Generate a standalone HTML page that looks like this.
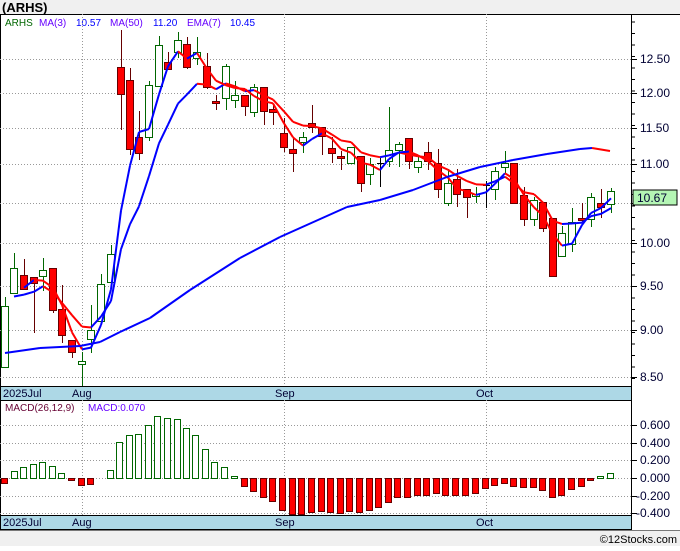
<!DOCTYPE html><html><head><style>
body{margin:0;width:680px;height:546px;overflow:hidden;background:#fff;font-family:"Liberation Sans",sans-serif}
svg text{font-family:"Liberation Sans",sans-serif}
</style></head><body>
<svg id="s" width="680" height="546" xmlns="http://www.w3.org/2000/svg">
<rect x="0" y="0" width="680" height="14" fill="#f0f0f0"/>
<text x="2" y="12" font-size="13" font-weight="bold" fill="#000">(ARHS)</text>
<line x1="0" y1="14.5" x2="680" y2="14.5" stroke="#000"/>
<rect x="0" y="530" width="680" height="16" fill="#f0f0f0"/>
<line x1="0" y1="530.5" x2="680" y2="530.5" stroke="#000" stroke-width="0.5"/>
<text x="677" y="543" font-size="11" text-anchor="end" fill="#000">©12Stocks.com</text>
<rect x="0" y="386" width="632" height="14" fill="#add8e6"/>
<rect x="0" y="515" width="632" height="15" fill="#add8e6"/>
<line x1="0" y1="386.5" x2="632" y2="386.5" stroke="#000"/>
<line x1="0" y1="400.5" x2="632" y2="400.5" stroke="#000"/>
<line x1="0" y1="515.5" x2="632" y2="515.5" stroke="#000"/>
<line x1="0" y1="529.5" x2="632" y2="529.5" stroke="#000"/>
<line x1="631.5" y1="14" x2="631.5" y2="530" stroke="#000"/>
<line x1="0.5" y1="14" x2="0.5" y2="530" stroke="#000"/>
<g font-size="11" fill="#000033">
<text x="3" y="397">2025Jul</text><text x="72" y="397">Aug</text><text x="275" y="397">Sep</text><text x="476" y="397">Oct</text>
<text x="3" y="526">2025Jul</text><text x="72" y="526">Aug</text><text x="275" y="526">Sep</text><text x="476" y="526">Oct</text>
</g>
<text x="5" y="26" font-size="10" fill="#006600">ARHS</text>
<text x="39" y="26" font-size="10" fill="#6600ff">MA(3)</text>
<text x="76" y="26" font-size="10" fill="#0000ff">10.57</text>
<text x="110" y="26" font-size="10" fill="#6600ff">MA(50)</text>
<text x="153" y="26" font-size="10" fill="#0000ff">11.20</text>
<text x="187" y="26" font-size="10" fill="#6600ff">EMA(7)</text>
<text x="230" y="26" font-size="10" fill="#0000ff">10.45</text>
<text x="5" y="411" font-size="10" fill="#660033">MACD(26,12,9)</text>
<text x="88" y="411" font-size="10" fill="#6600ff">MACD:0.070</text>
<g id="grid" stroke="#999" stroke-dasharray="1,2" stroke-width="1"></g>
<g id="c"></g>
<rect x="633" y="190" width="44" height="15" fill="#b4f5b4" stroke="#000"/>
<text x="637" y="202" font-size="12" fill="#000033">10.67</text>
</svg>
<script>
var s=document.getElementById('c'),g=document.getElementById('grid'),NS='http://www.w3.org/2000/svg';
function el(t,a,p){var e=document.createElementNS(NS,t);for(var k in a)e.setAttribute(k,a[k]);(p||s).appendChild(e);return e;}
var pl=[[59,'12.50'],[93,'12.00'],[128,'11.50'],[164,'11.00'],[203,''],[243,'10.00'],[286,'9.50'],[330,'9.00'],[377,'8.50']];
pl.forEach(function(p){el('line',{x1:0,y1:p[0]+.5,x2:631,y2:p[0]+.5},g);var t=el('line',{x1:631,y1:p[0]+.5,x2:637,y2:p[0]+.5,stroke:'#000'});if(p[1]){var x=el('text',{x:640,y:p[0]+4,'font-size':12,fill:'#000033'});x.textContent=p[1];}});
for(var y=22;y<386;y+=11.5){el('line',{x1:631,y1:y,x2:635,y2:y,stroke:'#000'});}
var ml=[[425,'0.600'],[443,'0.400'],[460,'0.200'],[478,'0.000'],[496,'-0.200'],[513,'-0.400']];
ml.forEach(function(p){el('line',{x1:0,y1:p[0]+.5,x2:631,y2:p[0]+.5},g);el('line',{x1:631,y1:p[0]+.5,x2:637,y2:p[0]+.5,stroke:'#000'});var x=el('text',{x:p[1][0]=='-'?636:640,y:p[0]+4,'font-size':12,fill:'#000033'});x.textContent=p[1];});
[82,284,486].forEach(function(x){el('line',{x1:x+.5,y1:14,x2:x+.5,y2:386},g);el('line',{x1:x+.5,y1:400,x2:x+.5,y2:515},g);});
// x, type(g/r/d), bodyTop, bodyBot, high, low
var C=[[5,'g',306,367,297,367],[14,'g',268,293,253,293],[24,'r',275,289,259,289],[34,'r',277,283,280,333],[43,'g',270,276,258,291],[53,'r',268,310,268,313],[62,'r',309,335,285,343],[72,'r',340,352,340,358],[82,'g',361,364,352,386],[91,'g',330,339,305,353],[101,'g',284,321,274,321],[111,'g',254,282,245,282],[121,'r',67,94,30,130],[130,'r',80,149,68,155],[139,'r',137,153,111,160],[149,'g',85,137,81,141],[159,'g',45,86,36,86],[168,'r',62,69,52,69],[178,'g',40,52,32,58],[187,'r',44,67,37,69],[197,'g',52,58,37,65],[207,'r',66,87,53,89],[216,'r',101,103,95,110],[226,'g',66,98,64,110],[235,'g',95,100,81,108],[245,'r',95,106,95,116],[254,'g',87,112,84,117],[264,'r',87,111,87,125],[273,'r',109,112,105,125],
[284,'r',133,147,118,152],[293,'r',149,153,137,172],[303,'g',137,142,132,153],[312,'r',123,127,105,133],[322,'r',127,136,127,155],[332,'r',148,153,137,163],[341,'r',156,158,151,170],[351,'g',147,163,147,164],[361,'r',156,183,156,192],[370,'g',164,174,158,185],[380,'d',163,163,158,187],[389,'g',150,161,107,167],[399,'g',144,150,142,167],[409,'r',138,161,138,169],[418,'g',161,167,157,173],[428,'r',152,161,142,170],[438,'r',163,189,149,198],[448,'g',183,203,169,206],[457,'r',179,194,169,207],[467,'r',189,197,189,218],[476,'g',194,196,187,203],[486,'d',185,186,181,208],[495,'g',171,189,167,200],[505,'g',163,167,151,173],[514,'r',163,203,163,203],[524,'r',195,219,187,226],[534,'g',200,219,197,226],[543,'r',202,228,202,232],[553,'r',218,276,218,277],[562,'g',233,256,226,256],[572,'g',222,244,208,252],[582,'r',218,220,203,222],[591,'g',197,219,193,227],[601,'r',203,207,189,218],[611,'g',191,204,188,213]];
var cl=[];
C.forEach(function(c){var col=c[1]=='g'?'#006600':(c[1]=='r'?'#660000':'#000');
el('line',{x1:c[0]+.5,y1:c[4],x2:c[0]+.5,y2:c[5],stroke:col});
if(c[1]=='d'){el('line',{x1:c[0]-3,y1:c[2]+.5,x2:c[0]+4,y2:c[2]+.5,stroke:col});}
else el('rect',{x:c[0]-3.5,y:c[2]+.5,width:7,height:Math.max(1,c[3]-c[2]),fill:c[1]=='g'?'#fff':'#ff0000',stroke:col});
cl.push([c[0],c[1]=='g'?c[2]:c[3]]);});
function line(pts){for(var i=1;i<pts.length;i++){var a=pts[i-1],b=pts[i];el('line',{x1:a[0],y1:a[1],x2:b[0],y2:b[1],stroke:b[1]<=a[1]?'#0000ff':'#ff0000','stroke-width':2});}}
var m3=[];for(var i=2;i<cl.length;i++)m3.push([cl[i][0],(cl[i][1]+cl[i-1][1]+cl[i-2][1])/3]);
var e=[],v=cl[0][1];for(var i=0;i<cl.length;i++){v=v+(cl[i][1]-v)*0.25;e.push([cl[i][0],v]);}
line(e.slice(1));line(m3);
line([[5,353],[40,348],[80,346],[100,342],[120,332],[150,318],[190,290],[240,258],[280,237],[347,207],[380,200],[413,190],[447,177],[480,167],[513,160],[547,154],[580,149],[592,148],[610,151]]);
var M=[[5,483,'r'],[15,471,'g'],[24,467,'g'],[34,464,'g'],[43,462,'g'],[53,466,'g'],[62,473,'g'],[72,480,'r'],[82,485,'r'],[91,484,'r'],[111,470,'g'],[120,442,'g'],[130,435,'g'],[139,434,'g'],[149,425,'g'],[158,416,'g'],[168,418,'g'],[178,419,'g'],[187,428,'g'],[196,435,'g'],[206,449,'g'],[215,462,'g'],[225,467,'g'],[235,476,'g'],[245,486,'r'],[254,491,'r'],[264,497,'r'],[273,501,'r'],[283,510,'r'],[293,514,'r'],[302,514,'r'],[312,512,'r'],[322,511,'r'],[331,512,'r'],[341,513,'r'],[350,511,'r'],[360,512,'r'],[370,510,'r'],[379,507,'r'],[389,502,'r'],[398,497,'r'],[408,497,'r'],[418,495,'r'],[427,495,'r'],[437,493,'r'],[446,495,'r'],[456,495,'r'],[466,495,'r'],[476,493,'r'],[486,488,'r'],[495,485,'r'],[505,483,'r'],[514,486,'r'],[524,487,'r'],[534,487,'r'],[543,490,'r'],[553,497,'r'],[562,495,'r'],[572,489,'r'],[582,486,'r'],[591,480,'r'],[601,476,'g'],[611,473,'g']];
M.forEach(function(m){var z=478,t=Math.min(z,m[1]),h=Math.abs(m[1]-z)||1;
el('rect',{x:m[0]-3.5,y:t+.5,width:6,height:h,fill:m[2]=='g'?'#fff':'#ff0000',stroke:m[2]=='g'?'#006600':'#660000'});});
</script>
</body></html>
